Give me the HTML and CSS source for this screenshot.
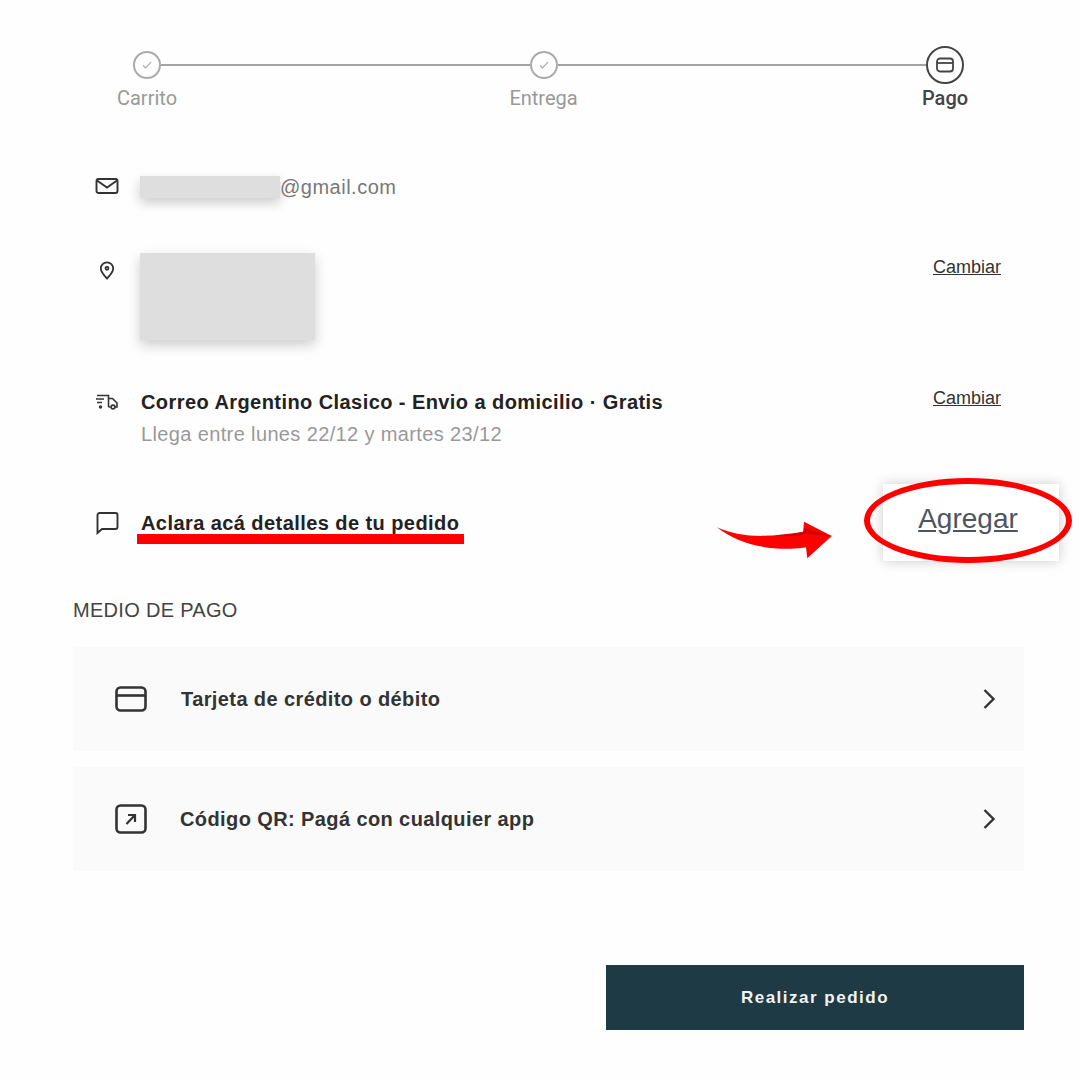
FILE: index.html
```html
<!DOCTYPE html>
<html lang="es">
<head>
  <meta charset="UTF-8" />
  <title>Pago</title>
  <link rel="stylesheet" href="styles.css">
</head>
<body>
<div class="page">

  <div class="stepper">
    <div class="step">
      <div class="step-slot">
        <div class="step-circle">
          <svg width="12" height="12" viewBox="0 0 12 12" fill="none" stroke="#aaa" stroke-width="1.2"><path d="M2 6.500l2.600 2.400L10 3.200"/></svg>
        </div>
      </div>
      <span class="step-label">Carrito</span>
    </div>
    <div class="step-line"></div>
    <div class="step">
      <div class="step-slot">
        <div class="step-circle">
          <svg width="12" height="12" viewBox="0 0 12 12" fill="none" stroke="#aaa" stroke-width="1.2"><path d="M2 6.500l2.600 2.400L10 3.200"/></svg>
        </div>
      </div>
      <span class="step-label">Entrega</span>
    </div>
    <div class="step-line"></div>
    <div class="step step-active">
      <div class="step-slot">
        <div class="step-circle">
          <svg width="18" height="16" viewBox="0 0 18 16" fill="none" stroke="#444" stroke-width="1.8"><rect x="1" y="1.500" width="16" height="13" rx="3"/><path d="M1 6h16"/></svg>
        </div>
      </div>
      <span class="step-label">Pago</span>
    </div>
  </div>

  <div class="summary">
    <div class="row row-email">
      <svg class="row-icon" width="24" height="18" viewBox="0 0 24 18" fill="none" stroke="#333" stroke-width="1.9"><rect x="1.500" y="2" width="21" height="14" rx="2"/><path d="M2 3.500l10 7 10-7"/></svg>
      <div class="row-body email-line">
        <span class="blurred blurred-email"></span><span>@gmail.com</span>
      </div>
    </div>

    <div class="row row-address">
      <svg class="row-icon" width="24" height="20" viewBox="0 0 24 20" fill="none" stroke="#333" stroke-width="1.8"><path d="M12 18.500c-3.500-3.600-6.200-6.400-6.200-10a6.200 6.200 0 0 1 12.400 0c0 3.600-2.700 6.400-6.200 10z"/><circle cx="12" cy="8.300" r="1.500"/></svg>
      <div class="row-body">
        <div class="blurred blurred-address"></div>
      </div>
      <a class="row-action" href="#">Cambiar</a>
    </div>

    <div class="row row-shipping">
      <svg class="row-icon" width="24" height="18" viewBox="0 0 24 18" fill="none" stroke="#333" stroke-width="1.6"><path d="M2 2.500h11.500V14M1 6h8M2 9.500h5M13.500 5.500h4l4.500 4.500v4h-2M13.500 14h2"/><circle cx="5.500" cy="14" r="1.700" fill="#333" stroke="none"/><circle cx="18" cy="14" r="1.900"/></svg>
      <div class="row-body">
        <div class="row-title">Correo Argentino Clasico - Envio a domicilio · Gratis</div>
        <div class="row-sub">Llega entre lunes 22/12 y martes 23/12</div>
      </div>
      <a class="row-action" href="#">Cambiar</a>
    </div>

    <div class="row row-note">
      <svg class="row-icon" width="24" height="24" viewBox="0 0 24 24" fill="none" stroke="#333" stroke-width="1.9"><path d="M4.500 2h16a2 2 0 0 1 2 2v12a2 2 0 0 1-2 2H7l-4.500 4V4a2 2 0 0 1 2-2z"/></svg>
      <div class="row-body">
        <div class="row-title">Aclara acá detalles de tu pedido</div>
      </div>
    </div>
  </div>

  <h2 class="pay-heading">MEDIO DE PAGO</h2>

  <div class="pay-list">
    <div class="pay-option">
      <svg class="pay-icon" width="32" height="26" viewBox="0 0 32 26" fill="none" stroke="#333" stroke-width="2.600"><rect x="1.500" y="1.500" width="29" height="23" rx="4"/><path d="M1.500 9.500h29"/></svg>
      <span class="pay-name">Tarjeta de crédito o débito</span>
      <svg class="pay-chevron" width="14" height="22" viewBox="0 0 14 22" fill="none" stroke="#333" stroke-width="2.400"><path d="M2.500 2l9 9-9 9"/></svg>
    </div>
    <div class="pay-option">
      <svg class="pay-icon" width="32" height="30" viewBox="0 0 32 30" fill="none" stroke="#333" stroke-width="2.600"><rect x="1.500" y="1.500" width="29" height="27" rx="4"/><path d="M11.500 20l7.500-8M13 11h7v7" stroke-width="2.200"/></svg>
      <span class="pay-name pay-name-qr">Código QR: Pagá con cualquier app</span>
      <svg class="pay-chevron" width="14" height="22" viewBox="0 0 14 22" fill="none" stroke="#333" stroke-width="2.400"><path d="M2.500 2l9 9-9 9"/></svg>
    </div>
  </div>

  <div class="checkout">
    <button class="checkout-btn" type="button">Realizar pedido</button>
  </div>

  <!-- annotations drawn over the screenshot -->
  <div class="mark-underline"></div>
  <svg class="mark-arrow" width="120" height="42" viewBox="0 0 120 42">
    <path d="M2 7.300C30 20 60 16 88.300 11.700L89 1.700 116.700 16 92.300 38.300 91 27.300C60 32 25 26 2 7.300z" fill="#f00"/>
    <path d="M60 15C72 15 80 14 88.300 11.700L89 8 116.700 16 90 14C80 17 70 17 60 15z" fill="#d40000"/>
  </svg>
  <div class="zoom-box"><a href="#">Agregar</a></div>
  <div class="mark-ellipse"></div>
</div>
</body>
</html>
```

FILE: styles.css
```css
body,
html {
  margin: 0;
  padding: 0;
  background-color: #fefefe;
  font-family: "Liberation Sans", Arial, sans-serif;
}

.page {
  position: relative;
  width: 1080px;
  height: 1080px;
  overflow: hidden;
}

/* stepper */
.stepper {
  display: flex;
  padding: 46px 116px 0 133px;
}
.step {
  display: flex;
  flex-direction: column;
  align-items: center;
  width: 28px;
}
.step-active {
  width: 38px;
}
.step-slot {
  display: flex;
  align-items: center;
  height: 38px;
}
.step-circle {
  display: flex;
  align-items: center;
  justify-content: center;
  box-sizing: border-box;
  width: 28px;
  height: 28px;
  border: 2px solid #aaa;
  border-radius: 50%;
}
.step-active .step-circle {
  width: 38px;
  height: 38px;
  border-color: #444;
}
.step-line {
  flex: 1;
  height: 2px;
  margin-top: 18px;
  background-color: #a3a3a3;
}
.step-label {
  margin-top: 4px;
  font-family: Roboto, "Liberation Sans", sans-serif;
  font-size: 20px;
  line-height: 20px;
  white-space: nowrap;
  color: #999;
}
.step-active .step-label {
  font-weight: 500;
  color: #444;
}

/* summary rows */
.summary {
  margin: 0 79px 0 95px;
}
.row {
  display: flex;
  align-items: flex-start;
}
.row-icon {
  flex: none;
  margin-right: 22px;
}
.row-body {
  flex: 1;
}
.row-email {
  margin-top: 67px;
  height: 24px;
}
.row-email .row-icon {
  margin-top: 2px;
}
.row-address {
  margin-top: 42px;
  height: 87px;
  padding-top: 12px;
}
.row-address .row-icon {
  margin-top: 7px;
}
.row-address .row-action {
  margin-top: 4px;
}
.row-shipping {
  margin-top: 50px;
}
.row-shipping .row-icon {
  margin-top: 3px;
}
.row-shipping .row-action {
  margin-top: -2px;
}
.row-note {
  margin-top: 65px;
}
.row-action {
  font-size: 18px;
  line-height: 20px;
  color: #333;
}
.email-line {
  display: flex;
  align-items: center;
  font-size: 20px;
  line-height: 24px;
  letter-spacing: 0.5px;
  color: #777;
}
.blurred {
  background-color: #dedede;
  box-shadow: 0 5px 12px rgba(0, 0, 0, 0.2);
}
.blurred-email {
  display: block;
  width: 140px;
  height: 22px;
  margin-left: -1px;
}
.blurred-address {
  width: 175px;
  height: 87px;
  margin-left: -1px;
}
.row-title {
  font-size: 20px;
  font-weight: bold;
  line-height: 24px;
  letter-spacing: 0.43px;
  color: #222;
}
.row-sub {
  margin-top: 8px;
  font-size: 20px;
  line-height: 24px;
  letter-spacing: 0.37px;
  color: #999;
}

/* payment */
.pay-heading {
  margin: 63px 0 0 73px;
  font-size: 20px;
  font-weight: normal;
  line-height: 24px;
  letter-spacing: 0.3px;
  color: #444;
}
.pay-list {
  display: flex;
  flex-direction: column;
  gap: 16px;
  margin: 25px 56px 0 73px;
}
.pay-option {
  display: flex;
  align-items: center;
  height: 104px;
  padding: 0 28px 0 42px;
  background-color: #fafafa;
}
.pay-icon {
  flex: none;
  margin-right: 34px;
}
.pay-name {
  flex: 1;
  font-size: 20px;
  font-weight: bold;
  letter-spacing: 0.4px;
  color: #333;
}
.pay-name-qr {
  margin-left: -1px;
}
.checkout {
  display: flex;
  justify-content: flex-end;
  margin: 94px 56px 0 0;
}
.checkout-btn {
  width: 418px;
  height: 65px;
  border: none;
  background-color: #1e3a44;
  font-family: "Liberation Sans", Arial, sans-serif;
  font-size: 17px;
  font-weight: bold;
  letter-spacing: 1.5px;
  color: #f2f2f2;
}

/* annotations */
.mark-underline {
  position: absolute;
  left: 137px;
  top: 534px;
  width: 327px;
  height: 10px;
  background-color: #f00;
}
.mark-arrow {
  position: absolute;
  left: 715px;
  top: 520px;
}
.zoom-box {
  position: absolute;
  left: 883px;
  top: 484px;
  display: flex;
  align-items: center;
  justify-content: center;
  box-sizing: border-box;
  width: 176px;
  height: 77px;
  padding: 0 6px 8px 0;
  background-color: #fff;
  box-shadow: 0 0 12px rgba(0, 0, 0, 0.2);
}
.zoom-box a {
  font-size: 28px;
  color: #4d5560;
}
.mark-ellipse {
  position: absolute;
  left: 864px;
  top: 478px;
  box-sizing: border-box;
  width: 208px;
  height: 85px;
  border: 6px solid #f00;
  border-radius: 50%;
}
```
